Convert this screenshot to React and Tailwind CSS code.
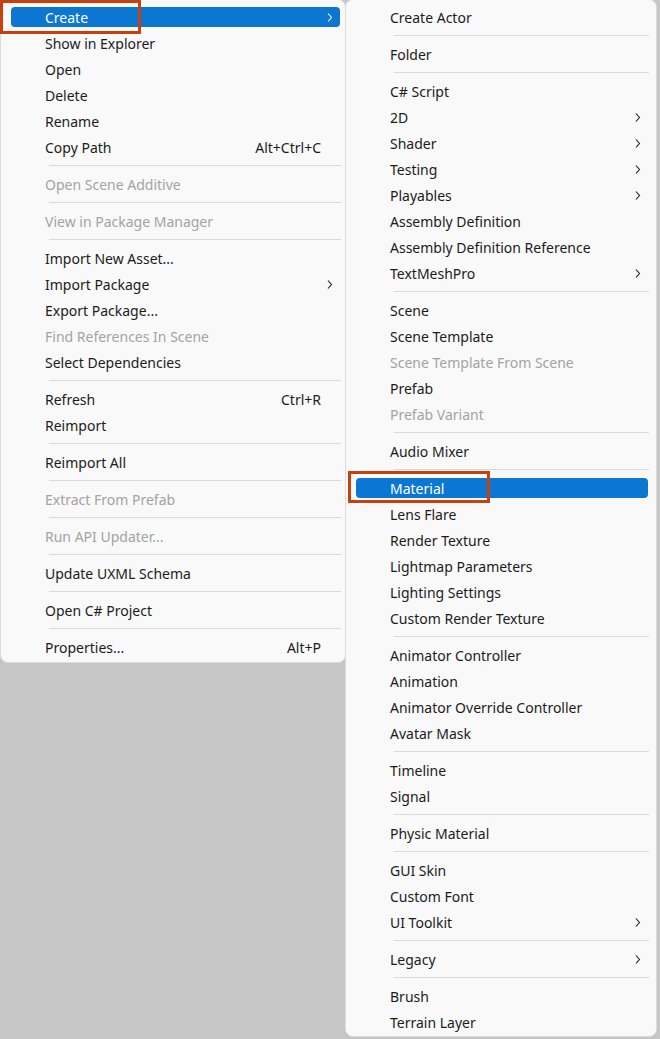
const leftItems = [
  { label: 'Create', arrow: true, active: true },
  { label: 'Show in Explorer' },
  { label: 'Open' },
  { label: 'Delete' },
  { label: 'Rename' },
  { label: 'Copy Path', shortcut: 'Alt+Ctrl+C' },
  'sep',
  { label: 'Open Scene Additive', disabled: true },
  'sep',
  { label: 'View in Package Manager', disabled: true },
  'sep',
  { label: 'Import New Asset...' },
  { label: 'Import Package', arrow: true },
  { label: 'Export Package...' },
  { label: 'Find References In Scene', disabled: true },
  { label: 'Select Dependencies' },
  'sep',
  { label: 'Refresh', shortcut: 'Ctrl+R' },
  { label: 'Reimport' },
  'sep',
  { label: 'Reimport All' },
  'sep',
  { label: 'Extract From Prefab', disabled: true },
  'sep',
  { label: 'Run API Updater...', disabled: true },
  'sep',
  { label: 'Update UXML Schema' },
  'sep',
  { label: 'Open C# Project' },
  'sep',
  { label: 'Properties...', shortcut: 'Alt+P' },
];

const rightItems = [
  { label: 'Create Actor' },
  'sep',
  { label: 'Folder' },
  'sep',
  { label: 'C# Script' },
  { label: '2D', arrow: true },
  { label: 'Shader', arrow: true },
  { label: 'Testing', arrow: true },
  { label: 'Playables', arrow: true },
  { label: 'Assembly Definition' },
  { label: 'Assembly Definition Reference' },
  { label: 'TextMeshPro', arrow: true },
  'sep',
  { label: 'Scene' },
  { label: 'Scene Template' },
  { label: 'Scene Template From Scene', disabled: true },
  { label: 'Prefab' },
  { label: 'Prefab Variant', disabled: true },
  'sep',
  { label: 'Audio Mixer' },
  'sep',
  { label: 'Material', active: true },
  { label: 'Lens Flare' },
  { label: 'Render Texture' },
  { label: 'Lightmap Parameters' },
  { label: 'Lighting Settings' },
  { label: 'Custom Render Texture' },
  'sep',
  { label: 'Animator Controller' },
  { label: 'Animation' },
  { label: 'Animator Override Controller' },
  { label: 'Avatar Mask' },
  'sep',
  { label: 'Timeline' },
  { label: 'Signal' },
  'sep',
  { label: 'Physic Material' },
  'sep',
  { label: 'GUI Skin' },
  { label: 'Custom Font' },
  { label: 'UI Toolkit', arrow: true },
  'sep',
  { label: 'Legacy', arrow: true },
  'sep',
  { label: 'Brush' },
  { label: 'Terrain Layer' },
];

function Chevron({ active }) {
  return (
    <svg width="6" height="9" viewBox="0 0 6 9" className={active ? 'text-white' : 'text-[#1b1b1b]'}>
      <path d="M1 0.5 L4.5 4.5 L1 8.5" fill="none" stroke="currentColor" strokeWidth="1.1" />
    </svg>
  );
}

function MenuRow({ item, edge }) {
  const { label, shortcut, arrow, active, disabled } = item;
  return (
    <div className={`flex h-[26px] items-center ${edge}`}>
      <div
        className={`flex h-[20px] flex-1 items-center rounded-[4px] pl-[34px] ${
          active ? 'bg-[#0b77d2] text-white' : disabled ? 'text-[#a3a3a3]' : 'text-[#1b1b1b]'
        }`}
      >
        <span className="flex-1 whitespace-nowrap">{label}</span>
        {shortcut && <span className="whitespace-nowrap">{shortcut}</span>}
        <span className="flex w-[19px] shrink-0 items-center pl-[6px]">{arrow && <Chevron active={active} />}</span>
      </div>
    </div>
  );
}

function Menu({ items, className, edge, sepClass }) {
  return (
    <div className={`rounded-[8px] border border-[#dddddd] bg-[#f9f9f9] ${className}`}>
      {items.map((item, i) =>
        item === 'sep' ? (
          <div key={i} className={`flex h-[11px] items-center ${sepClass}`}>
            <div className="h-px flex-1 bg-[#d9d9d9]" />
          </div>
        ) : (
          <MenuRow key={i} item={item} edge={edge} />
        )
      )}
    </div>
  );
}

export default function App() {
  return (
    <div
      className="relative flex h-[1039px] w-[660px] items-start overflow-hidden bg-[#c6c6c6] text-[14px]"
      style={{ fontFamily: '"Noto Sans", "Open Sans", sans-serif' }}
    >
      <Menu
        items={leftItems}
        className="-mt-px w-[346px] pt-[4px] pb-[2px]"
        edge="pl-[10px] pr-[5px]"
        sepClass="pl-[48px] pr-[4px]"
      />
      <Menu
        items={rightItems}
        className="-ml-px -mt-px w-[312px] pt-[4px] pb-[1px]"
        edge="pl-[10px] pr-[8px]"
        sepClass="pl-[48px] pr-[7px]"
      />
      <div className="absolute left-0 top-0 h-[34px] w-[141px] border-[3px] border-[#c8400e]" />
      <div className="absolute left-[348px] top-[471px] h-[32px] w-[142px] border-[3px] border-[#c8400e]" />
    </div>
  );
}
